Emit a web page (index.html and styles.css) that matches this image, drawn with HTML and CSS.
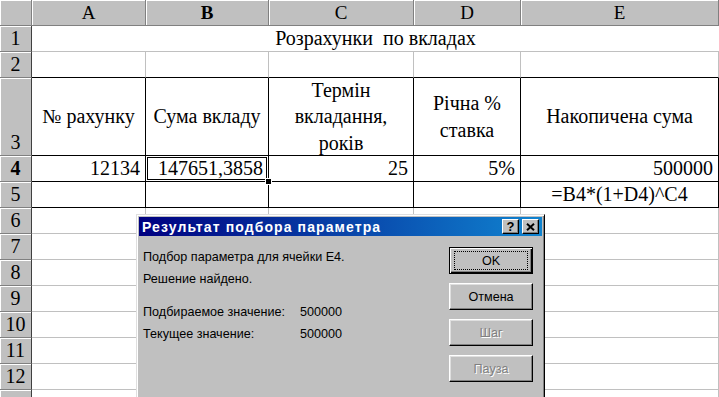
FILE: index.html
```html
<!DOCTYPE html>
<html lang="uk">
<head>
    <meta charset="UTF-8">
    <title>Розрахунки по вкладах</title>
    <link rel="stylesheet" href="styles.css">
</head>
<body>
    <div class="sheet">
        <div class="hdr corner"></div>
        <div class="hdr">A</div>
        <div class="hdr sel">B</div>
        <div class="hdr">C</div>
        <div class="hdr">D</div>
        <div class="hdr">E</div>

        <div class="hdr rownum">1</div>
        <div class="cell merged">Розрахунки&nbsp; по вкладах</div>

        <div class="hdr rownum">2</div>
        <div class="cell top-edge"></div>
        <div class="cell top-edge"></div>
        <div class="cell top-edge"></div>
        <div class="cell top-edge"></div>
        <div class="cell top-edge"></div>

        <div class="hdr rownum">3</div>
        <div class="cell box caption">№ рахунку</div>
        <div class="cell box caption">Сума вкладу</div>
        <div class="cell box caption">Термін<br>вкладання,<br>років</div>
        <div class="cell box caption">Річна %<br>ставка</div>
        <div class="cell box caption">Накопичена сума</div>

        <div class="hdr rownum sel">4</div>
        <div class="cell box num">12134</div>
        <div class="cell box num active">147651,3858</div>
        <div class="cell box num">25</div>
        <div class="cell box num">5%</div>
        <div class="cell box num">500000</div>

        <div class="hdr rownum">5</div>
        <div class="cell box"></div>
        <div class="cell box"></div>
        <div class="cell box"></div>
        <div class="cell box"></div>
        <div class="cell box formula">=B4*(1+D4)^C4</div>

        <div class="hdr rownum">6</div>
        <div class="cell"></div><div class="cell"></div><div class="cell"></div><div class="cell"></div><div class="cell"></div>
        <div class="hdr rownum">7</div>
        <div class="cell"></div><div class="cell"></div><div class="cell"></div><div class="cell"></div><div class="cell"></div>
        <div class="hdr rownum">8</div>
        <div class="cell"></div><div class="cell"></div><div class="cell"></div><div class="cell"></div><div class="cell"></div>
        <div class="hdr rownum">9</div>
        <div class="cell"></div><div class="cell"></div><div class="cell"></div><div class="cell"></div><div class="cell"></div>
        <div class="hdr rownum">10</div>
        <div class="cell"></div><div class="cell"></div><div class="cell"></div><div class="cell"></div><div class="cell"></div>
        <div class="hdr rownum">11</div>
        <div class="cell"></div><div class="cell"></div><div class="cell"></div><div class="cell"></div><div class="cell"></div>
        <div class="hdr rownum">12</div>
        <div class="cell"></div><div class="cell"></div><div class="cell"></div><div class="cell"></div><div class="cell"></div>
        <div class="hdr rownum"></div>
        <div class="cell"></div><div class="cell"></div><div class="cell"></div><div class="cell"></div><div class="cell"></div>
    </div>

    <div class="dialog">
        <div class="titlebar">
            <span class="title">Результат подбора параметра</span>
            <span class="cap-btn help">?</span>
            <span class="cap-btn close">
                <svg width="9" height="8" viewBox="0 0 9 8">
                    <path d="M1 0.8 L8 7.2 M8 0.8 L1 7.2" stroke="#000" stroke-width="2" fill="none"/>
                </svg>
            </span>
        </div>
        <div class="dlg-body">
            <div class="dlg-text">
                <p class="line">Подбор параметра для ячейки E4.</p>
                <p class="line">Решение найдено.</p>
                <p class="line spaced"><span class="label">Подбираемое значение:</span>500000</p>
                <p class="line"><span class="label">Текущее значение:</span>500000</p>
            </div>
            <div class="dlg-buttons">
                <div class="btn default"><span class="focus">OK</span></div>
                <div class="btn">Отмена</div>
                <div class="btn disabled">Шаг</div>
                <div class="btn disabled">Пауза</div>
            </div>
        </div>
    </div>
</body>
</html>
```

FILE: styles.css
```css
body {
    margin: 0;
    width: 719px;
    height: 397px;
    overflow: hidden;
    background: #fff;
    font-family: 'Liberation Serif', 'Times New Roman', serif;
    color: #000;
}

.sheet {
    display: grid;
    grid-template-columns: 32px 114px 123px 145px 107px 198px;
    grid-template-rows: 26px 26px 26px 78px repeat(10, 26px);
    font-size: 20px;
}

.hdr {
    background: #c0c0c0;
    border-right: 1px solid #808080;
    border-bottom: 1px solid #808080;
    box-shadow: inset 1px 1px #fff;
    box-sizing: border-box;
    display: flex;
    align-items: center;
    justify-content: center;
    font-size: 19px;
    line-height: 1;
}

.hdr.sel {
    font-weight: 700;
}

.rownum {
    align-items: flex-end;
    padding-bottom: 3px;
    font-size: 20px;
    border-right-color: #404040;
}

.cell {
    border-right: 1px solid #c0c0c0;
    border-bottom: 1px solid #c0c0c0;
    box-sizing: border-box;
    display: flex;
    align-items: center;
    white-space: nowrap;
}

.merged {
    grid-column: span 5;
    justify-content: center;
    border-right: none;
}

.top-edge {
    border-bottom-color: #000;
}

.box {
    border-right-color: #000;
    border-bottom-color: #000;
}

.caption {
    justify-content: center;
    text-align: center;
    line-height: 26.5px;
}

.num {
    justify-content: flex-end;
    padding-right: 5px;
}

.formula {
    justify-content: center;
}

.active {
    position: relative;
}

.active::after {
    content: '';
    position: absolute;
    top: 1px;
    left: 1px;
    right: 1px;
    bottom: 1px;
    border: 1px solid #000;
}

.active::before {
    content: '';
    position: absolute;
    right: -4px;
    bottom: -4px;
    width: 5px;
    height: 5px;
    background: #000;
    border: 1px solid #fff;
    z-index: 2;
}

/* goal seek dialog */
.dialog {
    position: absolute;
    left: 136px;
    top: 214px;
    width: 409px;
    height: 200px;
    box-sizing: border-box;
    background: #c0c0c0;
    border: 1px solid;
    border-color: #dfdfdf #000 #000 #dfdfdf;
    box-shadow: inset 1px 1px #fff, inset -1px -1px #808080;
    padding: 2px;
    font-family: 'Liberation Sans', Arial, sans-serif;
    font-size: 12.6px;
    z-index: 5;
}

.titlebar {
    height: 19px;
    background: linear-gradient(to right, #000080, #1084d0);
    display: flex;
    align-items: center;
    padding: 0 3px 0 3px;
}

.title {
    flex: 1;
    color: #fff;
    font-weight: 700;
    font-size: 14px;
    letter-spacing: 1.1px;
}

.cap-btn {
    width: 17px;
    height: 15px;
    box-sizing: border-box;
    background: #c0c0c0;
    border: 1px solid;
    border-color: #fff #000 #000 #fff;
    box-shadow: inset -1px -1px #808080;
    display: flex;
    align-items: center;
    justify-content: center;
    font-weight: 700;
    font-size: 13px;
    line-height: 1;
}

.help {
    margin-right: 3px;
}

.dlg-body {
    display: flex;
    padding: 0 9px 0 4px;
}

.dlg-text {
    flex: 1;
    padding-top: 10px;
}

.line {
    margin: 0;
    height: 22px;
    line-height: 22px;
    white-space: nowrap;
}

.line.spaced {
    margin-top: 11px;
}

.label {
    display: inline-block;
    width: 157px;
}

.dlg-buttons {
    display: flex;
    flex-direction: column;
    gap: 9px;
    padding-top: 11px;
}

.btn {
    width: 84px;
    height: 27px;
    box-sizing: border-box;
    background: #c0c0c0;
    border: 1px solid;
    border-color: #fff #000 #000 #fff;
    box-shadow: inset -1px -1px #808080, inset 1px 1px #dfdfdf;
    display: flex;
    align-items: center;
    justify-content: center;
    font-size: 12.6px;
}

.btn.default {
    border: 1px solid #000;
    box-shadow: inset 1px 1px #fff, inset -1px -1px #000, inset -2px -2px #808080;
}

.focus {
    width: 72px;
    height: 17px;
    border: 1px dotted #000;
    display: flex;
    align-items: center;
    justify-content: center;
}

.btn.disabled {
    color: #808080;
    text-shadow: 1px 1px #fff;
}
```
